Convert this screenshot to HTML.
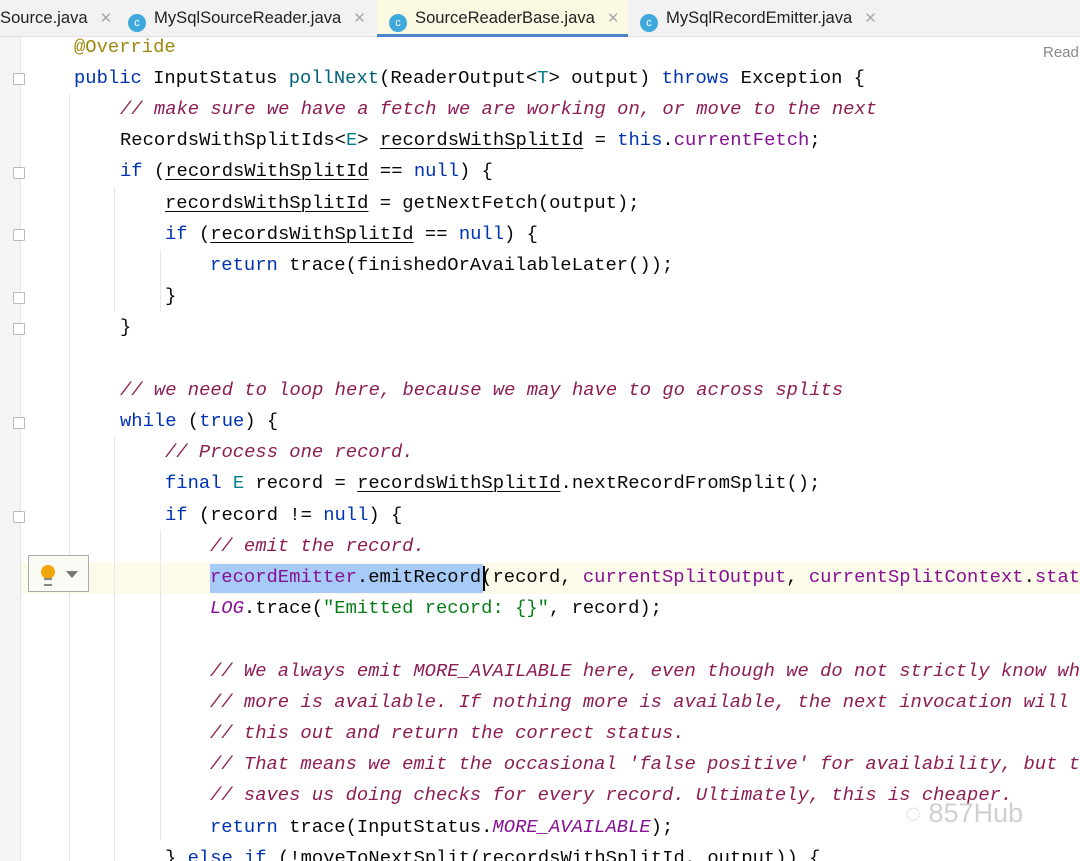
<!DOCTYPE html>
<html><head><meta charset="utf-8"><style>
html,body{margin:0;width:1080px;height:861px;overflow:hidden}
body{background:#fff;position:relative;font-family:"Liberation Sans",sans-serif}
#w{position:absolute;left:0;top:0;width:1080px;height:861px;overflow:hidden}
.tabs{position:absolute;left:0;top:0;width:1080px;height:36px;background:#f2f2f2;border-bottom:1px solid #e0e0e0}
.tab{position:absolute;top:0;height:36px;line-height:35px;font-size:16.6px;color:#222;white-space:nowrap}
.tab .x{color:#aaa;margin-left:12px;font-size:15px}
.ic{display:inline-block;width:18px;height:18px;border-radius:50%;background:#40a9dc;color:#fff;font-size:11px;line-height:18px;text-align:center;vertical-align:-3px;margin-right:8px}
.gut{position:absolute;left:0;top:37px;width:20px;height:824px;background:#f5f5f5;border-right:1px solid #e4e4e4}
.g{position:absolute;width:1px;background:#e6e6e6}
.l{position:absolute;height:31.2px;line-height:31.2px;font-family:"Liberation Mono",monospace;font-size:18.83px;color:#080808;white-space:pre}
.k{color:#0033b3}.c{color:#8c1e55;font-style:italic}.f{color:#871094}.m{color:#00627a}.s{color:#067d17}.a{color:#9e880d}
.u{text-decoration:underline;text-underline-offset:3px;text-decoration-thickness:1px}
.fold{position:absolute;left:13px;width:10px;height:10px;border:1px solid #bbb;background:#fff;border-radius:1px}
</style></head><body><div id="w">
<div class="tabs">
<div class="tab" style="left:0">Source.java<span class="x">✕</span></div>
<div class="tab" style="left:128px"><span class="ic">c</span>MySqlSourceReader.java<span class="x">✕</span></div>
<div class="tab" style="left:377px;width:251px;background:#fcf9e3;padding-left:12px;box-sizing:border-box;border-bottom:3px solid #4a86c8;height:37px"><span class="ic">c</span>SourceReaderBase.java<span class="x">✕</span></div>
<div class="tab" style="left:640px"><span class="ic">c</span>MySqlRecordEmitter.java<span class="x">✕</span></div>
</div>
<div class="gut"></div>
<div style="position:absolute;left:21px;top:562.5px;width:1059px;height:31.2px;background:#fcfae8"></div>
<div style="position:absolute;left:210px;top:564px;width:273px;height:29px;background:#a6cbf7"></div>
<div style="position:absolute;left:483px;top:566px;width:2px;height:25px;background:#000"></div>
<div class="g" style="left:69px;top:94px;height:767px"></div>
<div class="g" style="left:114px;top:187px;height:125px"></div>
<div class="g" style="left:114px;top:437px;height:424px"></div>
<div class="g" style="left:160px;top:250px;height:62px"></div>
<div class="g" style="left:160px;top:530px;height:310px"></div>
<div style="position:absolute;left:28px;top:555px;width:61px;height:37px;border:1px solid #aaa;background:#fbfbf6;box-sizing:border-box"><div style="position:absolute;left:12px;top:9px;width:14px;height:14px;border-radius:50%;background:#f2a50c"></div><div style="position:absolute;left:15px;top:22px;width:8px;height:4px;border-bottom:2px solid #888;border-top:2px solid #888"></div><div style="position:absolute;left:37px;top:15px;border-left:6px solid transparent;border-right:6px solid transparent;border-top:7px solid #777"></div></div>
<div class="fold" style="top:73px"></div><div class="fold" style="top:167px"></div><div class="fold" style="top:229px"></div><div class="fold" style="top:292px"></div><div class="fold" style="top:323px"></div><div class="fold" style="top:417px"></div><div class="fold" style="top:511px"></div>
<div style="position:absolute;left:1043px;top:44px;font-size:15px;color:#888">Read</div>
<div class="l a" style="left:74px;top:31.5px">@Override</div>
<div class="l" style="left:74px;top:62.7px"><span class="k">public</span> InputStatus <span class="m">pollNext</span>(ReaderOutput&lt;<span style="color:#007e8a">T</span>&gt; output) <span class="k">throws</span> Exception {</div>
<div class="l c" style="left:120px;top:93.9px">// make sure we have a fetch we are working on, or move to the next</div>
<div class="l" style="left:120px;top:125.1px">RecordsWithSplitIds&lt;<span style="color:#007e8a">E</span>&gt; <span class="u">recordsWithSplitId</span> = <span class="k">this</span>.<span class="f">currentFetch</span>;</div>
<div class="l" style="left:120px;top:156.3px"><span class="k">if</span> (<span class="u">recordsWithSplitId</span> == <span class="k">null</span>) {</div>
<div class="l" style="left:165px;top:187.5px"><span class="u">recordsWithSplitId</span> = getNextFetch(output);</div>
<div class="l" style="left:165px;top:218.7px"><span class="k">if</span> (<span class="u">recordsWithSplitId</span> == <span class="k">null</span>) {</div>
<div class="l" style="left:210px;top:249.9px"><span class="k">return</span> trace(finishedOrAvailableLater());</div>
<div class="l" style="left:165px;top:281.1px">}</div>
<div class="l" style="left:120px;top:312.3px">}</div>
<div class="l c" style="left:120px;top:374.7px">// we need to loop here, because we may have to go across splits</div>
<div class="l" style="left:120px;top:405.9px"><span class="k">while</span> (<span class="k">true</span>) {</div>
<div class="l c" style="left:165px;top:437.1px">// Process one record.</div>
<div class="l" style="left:165px;top:468.3px"><span class="k">final</span> <span style="color:#007e8a">E</span> record = <span class="u">recordsWithSplitId</span>.nextRecordFromSplit();</div>
<div class="l" style="left:165px;top:499.5px"><span class="k">if</span> (record != <span class="k">null</span>) {</div>
<div class="l c" style="left:210px;top:530.7px">// emit the record.</div>
<div class="l" style="left:210px;top:561.9px"><span class="f">recordEmitter</span>.emitRecord(record, <span class="f">currentSplitOutput</span>, <span class="f">currentSplitContext</span>.<span class="f">stat</span></div>
<div class="l" style="left:210px;top:593.1px"><span class="f" style="font-style:italic">LOG</span>.trace(<span class="s">"Emitted record: {}"</span>, record);</div>
<div class="l c" style="left:210px;top:655.5px">// We always emit MORE_AVAILABLE here, even though we do not strictly know wh</div>
<div class="l c" style="left:210px;top:686.7px">// more is available. If nothing more is available, the next invocation will</div>
<div class="l c" style="left:210px;top:717.9px">// this out and return the correct status.</div>
<div class="l c" style="left:210px;top:749.1px">// That means we emit the occasional 'false positive' for availability, but t</div>
<div class="l c" style="left:210px;top:780.3px">// saves us doing checks for every record. Ultimately, this is cheaper.</div>
<div class="l" style="left:210px;top:811.5px"><span class="k">return</span> trace(InputStatus.<span class="f" style="font-style:italic">MORE_AVAILABLE</span>);</div>
<div class="l" style="left:165px;top:842.7px">} <span class="k">else if</span> (!moveToNextSplit(<span class="u">recordsWithSplitId</span>, output)) {</div>
<div style="position:absolute;left:905px;top:798px;font-size:27px;color:rgba(200,200,200,0.85);font-family:'Liberation Sans',sans-serif">◌ 857Hub</div>
</div></body></html>
